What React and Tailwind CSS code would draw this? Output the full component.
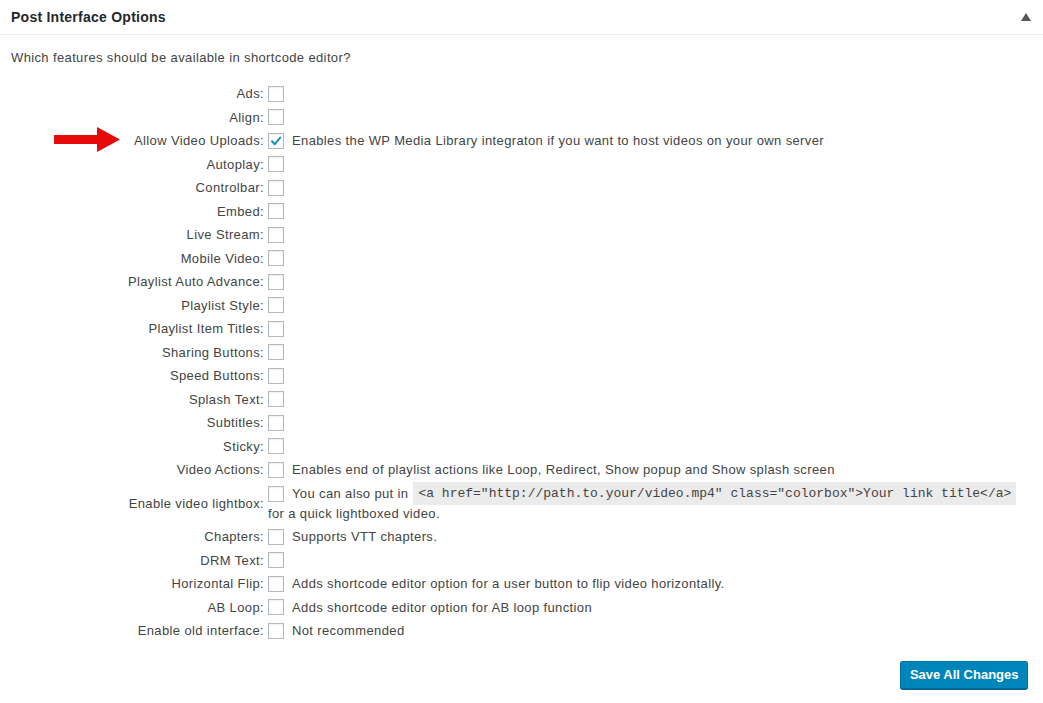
import React from 'react';

const rows = [
  { label: 'Ads' },
  { label: 'Align' },
  { label: 'Allow Video Uploads', checked: true, desc: 'Enables the WP Media Library integraton if you want to host videos on your own server' },
  { label: 'Autoplay' },
  { label: 'Controlbar' },
  { label: 'Embed' },
  { label: 'Live Stream' },
  { label: 'Mobile Video' },
  { label: 'Playlist Auto Advance' },
  { label: 'Playlist Style' },
  { label: 'Playlist Item Titles' },
  { label: 'Sharing Buttons' },
  { label: 'Speed Buttons' },
  { label: 'Splash Text' },
  { label: 'Subtitles' },
  { label: 'Sticky' },
  { label: 'Video Actions', desc: 'Enables end of playlist actions like Loop, Redirect, Show popup and Show splash screen' },
  { label: 'Enable video lightbox', lightbox: true },
  { label: 'Chapters', desc: 'Supports VTT chapters.' },
  { label: 'DRM Text' },
  { label: 'Horizontal Flip', desc: 'Adds shortcode editor option for a user button to flip video horizontally.' },
  { label: 'AB Loop', desc: 'Adds shortcode editor option for AB loop function' },
  { label: 'Enable old interface', desc: 'Not recommended' },
];

function Checkbox({ checked }) {
  return (
    <span className="w-4 h-4 flex-shrink-0 border border-[#b4b9be] bg-white shadow-[inset_0_1px_2px_rgba(0,0,0,0.07)] flex items-center justify-center">
      {checked && (
        <svg width="14" height="14" viewBox="0 0 14 14">
          <path d="M3 7.2 L5.8 10.2 L11.2 3.6" fill="none" stroke="#1e8cbe" strokeWidth="2" strokeLinecap="round" strokeLinejoin="round" />
        </svg>
      )}
    </span>
  );
}

export default function App() {
  return (
    <div className="relative w-[1043px] h-[703px] bg-white text-[13px] text-[#444] tracking-[0.37px] font-['Liberation_Sans',Arial,sans-serif]">
      {/* Header */}
      <div className="h-[35px] border-b border-[#eee] px-[11px] flex items-center justify-between">
        <h2 className="text-[14px] font-bold text-[#23282d] tracking-[0.25px]">Post Interface Options</h2>
        <svg width="10" height="8" viewBox="0 0 10 8" className="mr-[1px]">
          <path d="M5 0 L10 8 L0 8 Z" fill="#555" />
        </svg>
      </div>

      <div className="px-[11px]">
        <p className="mt-[13px] leading-5">Which features should be available in shortcode editor?</p>

        <div className="mt-[14px] flex flex-col">
          {rows.map((r) =>
            r.lightbox ? (
              <div key={r.label} className="flex h-[43.5px]">
                <div className="w-[253px] flex items-center justify-end pt-[1px]">{r.label}:</div>
                <div className="ml-1 pt-[2px]">
                  <div className="flex items-center h-5">
                    <Checkbox />
                    <span className="ml-2">You can also put in</span>
                    <code className="ml-[5px] bg-[#ebebeb] px-[5px] py-[2px] font-['Liberation_Mono',monospace] text-[13px] tracking-normal text-[#444] whitespace-nowrap">
                      {'<a href="http://path.to.your/video.mp4" class="colorbox">Your link title</a>'}
                    </code>
                  </div>
                  <div className="h-5 leading-5">for a quick lightboxed video.</div>
                </div>
              </div>
            ) : (
              <div key={r.label} className="flex items-center h-[23.5px]">
                <div className="w-[253px] text-right">{r.label}:</div>
                <div className="ml-1 flex items-center">
                  <Checkbox checked={r.checked} />
                  {r.desc && <span className="ml-2 whitespace-nowrap">{r.desc}</span>}
                </div>
              </div>
            )
          )}
        </div>

        <div className="flex justify-end mt-[18px] pr-[4px]">
          <button className="h-[28px] px-[8.5px] rounded-[3px] bg-[#0085ba] border border-[#0073aa] border-b-[#006799] shadow-[0_1px_0_#006799] text-white font-bold text-[13px] tracking-normal">
            Save All Changes
          </button>
        </div>
      </div>

      {/* Annotation arrow */}
      <svg className="absolute left-[54px] top-[127px]" width="66" height="25" viewBox="0 0 66 25">
        <path d="M0 8 L43 8 L43 0 L66 12.5 L43 25 L43 17 L0 17 Z" fill="#e60a0a" />
      </svg>
    </div>
  );
}
